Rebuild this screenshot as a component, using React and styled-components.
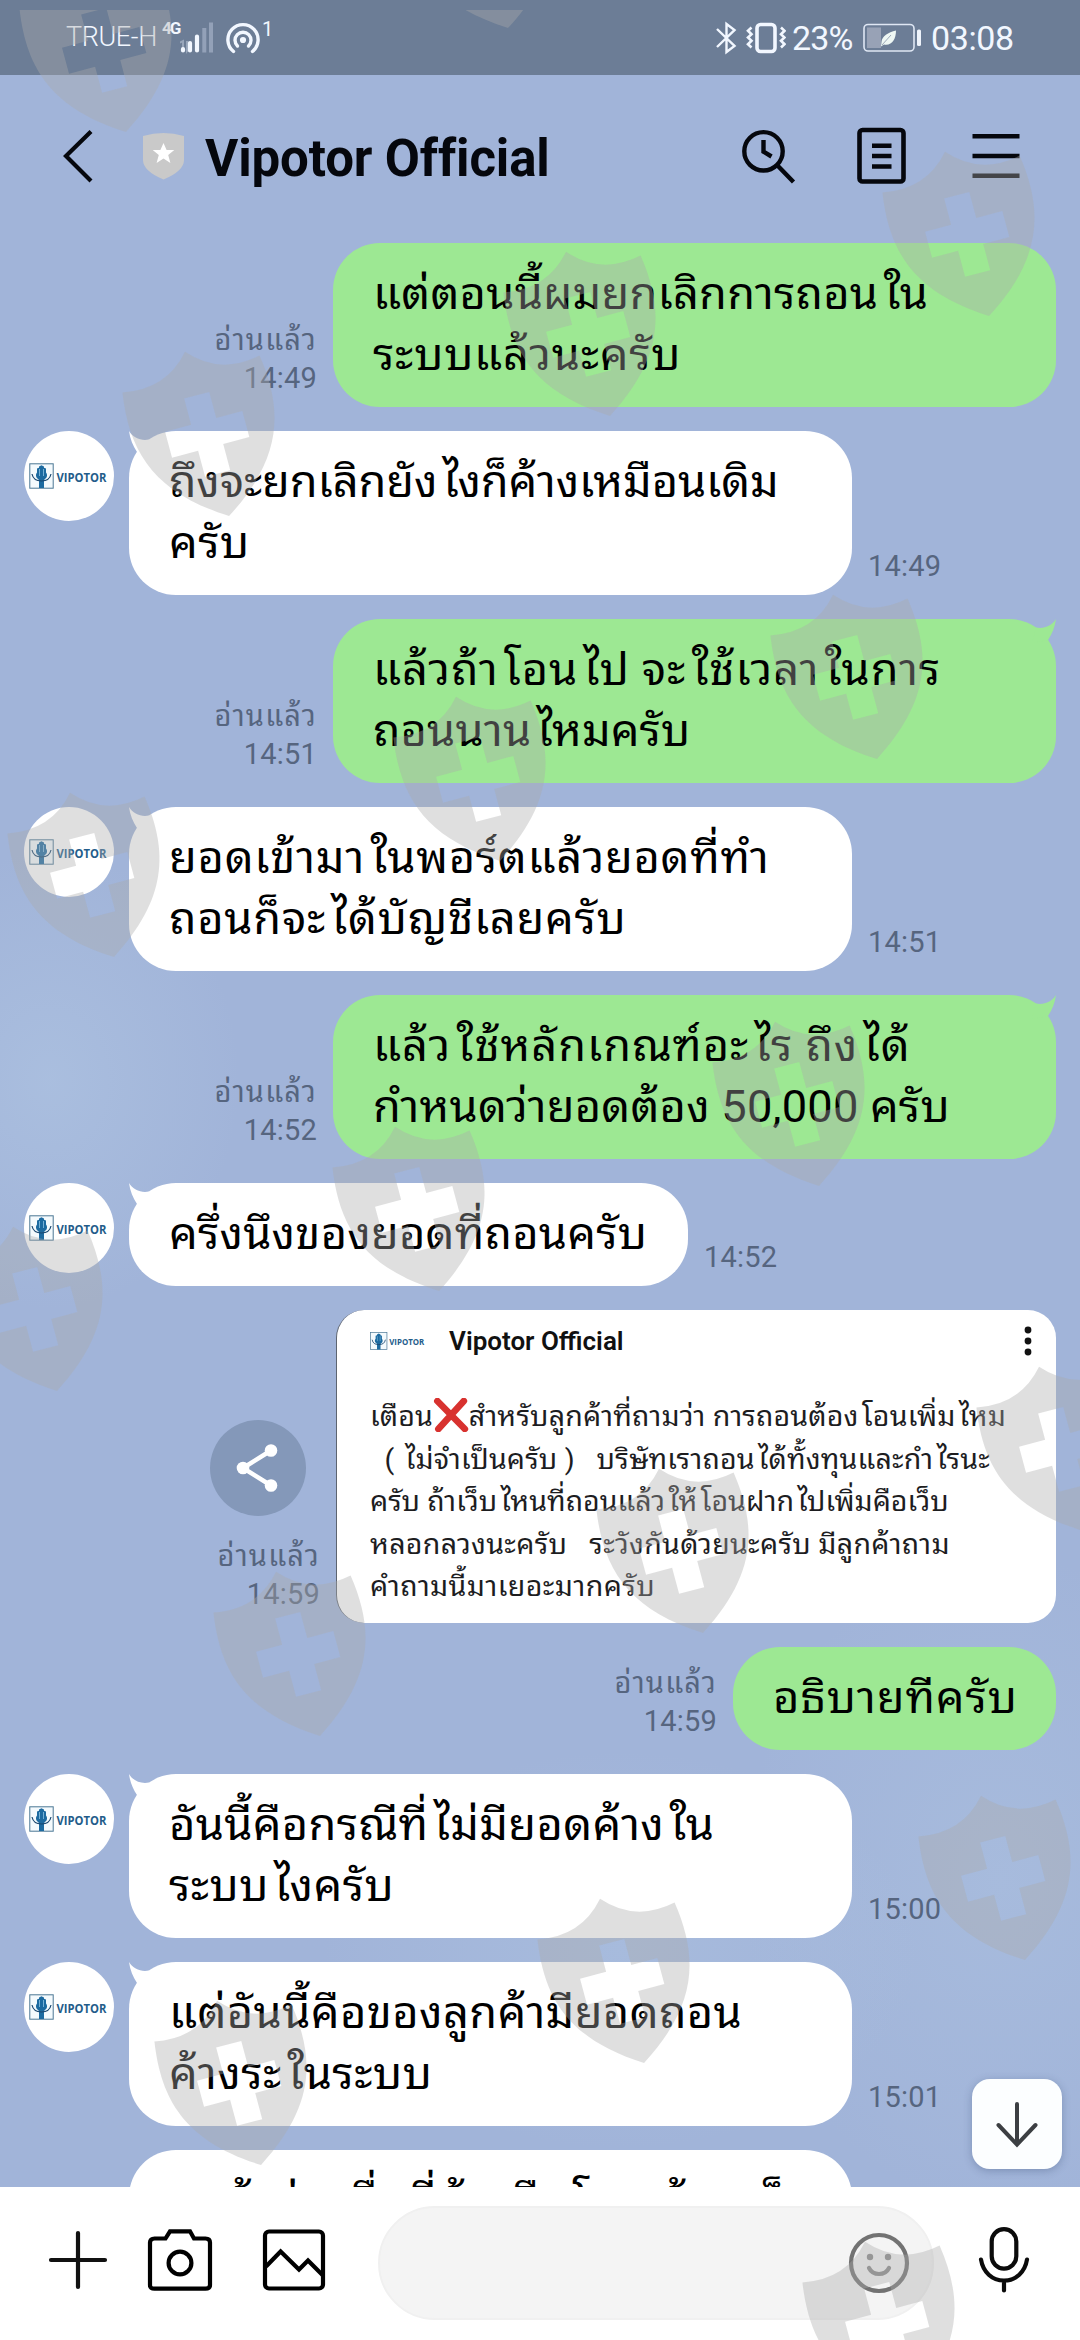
import React from "react";
import styled, { createGlobalStyle } from "styled-components";

const GlobalStyle = createGlobalStyle`
  * {
    box-sizing: border-box;
  }
  body {
    margin: 0;
    font-family: Roboto, "Noto Sans Thai Looped", "Noto Sans Thai", "Noto Sans", "DejaVu Sans", sans-serif;
  }
  svg {
    display: block;
    flex: none;
  }
`;

const Screen = styled.div`
  position: relative;
  display: flex;
  flex-direction: column;
  width: 1080px;
  height: 2340px;
  overflow: hidden;
  background:
    radial-gradient(ellipse 190px 230px at 50px 1080px, rgba(178, 200, 228, 0.5), transparent),
    radial-gradient(ellipse 300px 200px at 620px 1950px, rgba(178, 200, 228, 0.35), transparent),
    radial-gradient(ellipse 260px 330px at 1000px 1880px, rgba(178, 200, 228, 0.35), transparent),
    #a1b4d9;
`;

// Status bar
const StatusBar = styled.div`
  display: flex;
  align-items: center;
  flex: none;
  height: 75px;
  padding: 0 66px;
  background: #6c7d96;
  color: #f2f7ff;
`;

const Carrier = styled.span`
  width: 96px;
  margin-top: -2px;
  font-size: 27px;
  font-weight: 300;
  line-height: 32px;
  letter-spacing: -0.4px;
  white-space: nowrap;
`;

const Network = styled.span`
  align-self: flex-start;
  width: 18px;
  margin-top: 18px;
  font-size: 17px;
  font-weight: 700;
  line-height: 21px;
  letter-spacing: -2px;
`;

const HotspotCount = styled.span`
  align-self: flex-start;
  margin: 17px 0 0 2px;
  font-size: 20px;
  line-height: 24px;
`;

const StatusRight = styled.div`
  display: flex;
  align-items: center;
  margin-left: auto;
  font-size: 34px;
  line-height: 40px;
`;

const Percent = styled.span`
  width: 77px;
  padding-left: 6px;
  letter-spacing: -0.8px;
`;

const Clock = styled.span`
  width: 83px;
  letter-spacing: -0.4px;
`;

// Chat header
const Header = styled.div`
  display: flex;
  align-items: center;
  flex: none;
  height: 167px;
  padding: 0 55px 5px 60px;
`;

const Title = styled.h1`
  flex: 1;
  margin: 5px 0 0 20px;
  font-size: 51px;
  font-weight: 700;
  line-height: 60px;
  letter-spacing: -0.15px;
  color: #05070d;
  white-space: nowrap;
`;

const HeaderIcons = styled.div`
  display: flex;
  align-items: center;
  gap: 53px;
`;

// Messages
const Messages = styled.div`
  position: relative;
  display: flex;
  flex-direction: column;
  gap: 24px;
  flex: 1;
  min-height: 0;
  padding: 1px 24px 0;
  overflow: hidden;
`;

const Row = styled.div`
  display: flex;
  flex: none;
  justify-content: ${(p) => (p.$mine ? "flex-end" : "flex-start")};
`;

const AvatarCircle = styled.div`
  display: flex;
  align-items: center;
  justify-content: center;
  width: 90px;
  height: 90px;
  margin-right: 15px;
  border-radius: 50%;
  background: ${(p) => (p.$empty ? "transparent" : "#fff")};
`;

const LogoMark = styled.svg`
  overflow: visible;
`;

const BubbleBox = styled.div`
  position: relative;
  width: ${(p) => p.$width}px;
  padding: 21px 0 21px 40px;
  border-radius: 47px;
  background: ${(p) => (p.$mine ? "#9de893" : "#fff")};
  color: #000;
  font-size: 43.5px;
  line-height: 61px;
`;

const LineBox = styled.div`
  height: ${(p) => p.$height}px;
  letter-spacing: ${(p) => p.$track}px;
  white-space: pre;
  transform: scaleX(${(p) => p.$stretch});
  transform-origin: left;
`;

const LeadVowel = styled.span`
  margin-left: 0.12em;
`;

const Tail = styled.svg`
  position: absolute;
  top: 0;
  ${(p) => (p.$mine ? "right: 0; transform: scaleX(-1);" : "left: 0;")}
`;

const Meta = styled.div`
  align-self: flex-end;
  margin: 0 16px 10px;
  color: #56657f;
  font-size: 29px;
  line-height: 38px;
  letter-spacing: 0.2px;
  text-align: right;
  white-space: nowrap;
`;

const MetaLine = styled.div`
  height: 38px;
`;

const ReadMark = styled(MetaLine)`
  letter-spacing: 1.2px;
`;

// Shared card
const CardSide = styled.div`
  display: flex;
  flex-direction: column;
  align-items: flex-end;
  justify-content: flex-end;
`;

const ShareButton = styled.div`
  display: flex;
  align-items: center;
  justify-content: center;
  width: 96px;
  height: 96px;
  margin: 0 30px 21px 0;
  border-radius: 50%;
  background: #8498b9;
`;

const Card = styled.div`
  width: 720px;
  height: 313px;
  padding: 16px 24px 0 33px;
  border-left: 1px solid #5d6470;
  border-radius: 28px;
  background: #fff;
`;

const CardHead = styled.div`
  display: flex;
  align-items: center;
  height: 30px;
  margin-bottom: 40px;
`;

const CardTitle = styled.div`
  flex: 1;
  margin-left: 23px;
  font-size: 26px;
  font-weight: 600;
  line-height: 30px;
  color: #111;
`;

const CardText = styled.div`
  color: #1d1d1f;
  font-size: 28px;
  line-height: 42.5px;
`;

const Cross = styled.svg`
  && {
    display: inline-block;
  }
  vertical-align: -6px;
`;

const ScrollDown = styled.button`
  position: absolute;
  right: 18px;
  bottom: 18px;
  display: flex;
  align-items: center;
  justify-content: center;
  width: 90px;
  height: 90px;
  padding: 0;
  border: 0;
  border-radius: 18px;
  background: #fcfeff;
  box-shadow: 0 2px 8px rgba(40, 60, 100, 0.3);
`;

// Input bar
const InputBar = styled.div`
  display: flex;
  align-items: center;
  flex: none;
  height: 153px;
  padding: 0 50px 7px 47px;
  background: #fff;
`;

const InputField = styled.div`
  display: flex;
  align-items: center;
  justify-content: flex-end;
  width: 557px;
  height: 114px;
  margin: 6px 44px 0 51px;
  padding-right: 22px;
  border: 2px solid #f0f0f0;
  border-radius: 57px;
  background: #f4f4f4;
`;

const Gap = styled.div`
  width: ${(p) => p.$size}px;
  flex: none;
`;

const ShieldLayer = styled.svg`
  position: absolute;
  top: 10px;
  left: 0;
  pointer-events: none;
`;

const shields = [
  [88, -10], [470, -114], [951, 174], [572, 274], [191, 374], [839, 617],
  [462, 719], [76, 815], [781, 1044], [401, 1149], [19, 1249], [1045, 1389],
  [665, 1491], [282, 1594], [987, 1818], [606, 1921], [223, 2023], [871, 2264],
];

// each line is [text, letter spacing]
const messages = [
  { mine: true, time: "14:49", width: 723, lines: [["แต่ตอนนี้ผมยกเลิกการถอนใน", 0.2], ["ระบบแล้วนะครับ", 0.73]] },
  { tail: true, time: "14:49", width: 723, lines: [["ถึงจะยกเลิกยังไงก็ค้างเหมือนเดิม", -0.1], ["ครับ", 0.5]] },
  { mine: true, tail: true, time: "14:51", width: 723, lines: [["แล้วถ้าโอนไป จะใช้เวลาในการ", 0.85], ["ถอนนานไหมครับ", 0.1]] },
  { tail: true, time: "14:51", width: 723, lines: [["ยอดเข้ามาในพอร์ตแล้วยอดที่ทำ", 0.7], ["ถอนก็จะได้บัญชีเลยครับ", 0.7]] },
  { mine: true, tail: true, time: "14:52", width: 723, lines: [["แล้วใช้หลักเกณฑ์อะไร ถึงได้", 0.92], ["กำหนดว่ายอดต้อง 50,000 ครับ", 0.19]] },
  { tail: true, time: "14:52", width: 559, lines: [["ครึ่งนึงของยอดที่ถอนครับ", 0.2]] },
  { card: true, time: "14:59" },
  { mine: true, time: "14:59", width: 323, lines: [["อธิบายทีครับ", 0.84]] },
  { tail: true, time: "15:00", width: 723, lines: [["อันนี้คือกรณีที่ไม่มียอดค้างใน", 0.3], ["ระบบไงครับ", 0.43]] },
  { tail: true, time: "15:01", width: 723, lines: [["แต่อันนี้คือของลูกค้ามียอดถอน", 0.37], ["ค้างระในระบบ", 0.46]] },
  { noAvatar: true, width: 723, lines: [["ลูกค้าส่วนอื่นที่ค้างคือโอนเข้ามาก็", 0.7], [" ", 0]] },
];

function Logo({ width }) {
  return (
    <LogoMark width={width} height={(width * 26) / 80} viewBox="0 0 80 26">
      <rect x="0.8" y="0.8" width="23.4" height="24.4" fill="#f4fafd" stroke="#4a7794" strokeWidth="1" />
      <path d="M8 9.500V5.500l2-.8V3.500l2.500-1.200L15 3.500v1.200l2 .8v4c1 1 1.500 3 .5 5l-2.500 2.500V25h-5v-8l-2.500-2.500c-1-2-.5-4 .5-5z" fill="#1c6aa0" />
      <path d="M3 11c1 5 4 7 9.500 7S21 16 22 11" fill="none" stroke="#17456e" strokeWidth="1.200" />
      <path d="M10.500 6v7M14.500 6v7" stroke="#8cc4e4" strokeWidth="0.800" />
      <text x="27.500" y="18.500" fontFamily="Open Sans, sans-serif" fontSize="13" fontWeight="700" fill="#235c8a" textLength="50" lengthAdjust="spacingAndGlyphs">VIPOTOR</text>
    </LogoMark>
  );
}

// Tall leading vowels get some air before them
function Spaced({ text }) {
  return text
    .split(/(?=[ไใโ])/)
    .map((part, i) => (/^[ไใโ]/.test(part) ? <LeadVowel key={i}>{part}</LeadVowel> : part));
}

function Line({ height, track, stretch, children }) {
  return (
    <LineBox $height={height} $track={track} $stretch={stretch}>
      {React.Children.map(children, (c) => (typeof c === "string" ? <Spaced text={c} /> : c))}
    </LineBox>
  );
}

function MetaInfo({ read, time }) {
  if (!time) return null;
  return (
    <Meta>
      {read && <ReadMark>อ่านแล้ว</ReadMark>}
      <MetaLine>{time}</MetaLine>
    </Meta>
  );
}

function Message({ mine, tail, time, width, lines, noAvatar }) {
  return (
    <Row $mine={mine}>
      {!mine && <AvatarCircle $empty={noAvatar}>{!noAvatar && <Logo width={80} />}</AvatarCircle>}
      {mine && <MetaInfo read time={time} />}
      <BubbleBox $mine={mine} $width={width}>
        {tail && (
          <Tail $mine={mine} width="34" height="30" viewBox="0 0 34 30">
            <path d="M0 0C4 7 12 10 20 8.500L24 24L8 21C4 15 1 8 0 0z" fill={mine ? "#9de893" : "#fff"} />
          </Tail>
        )}
        {lines.map(([text, track]) => (
          <Line key={text} height={61} track={track} stretch={1.04}>{text}</Line>
        ))}
      </BubbleBox>
      {!mine && <MetaInfo time={time} />}
    </Row>
  );
}

function SharedCard({ time }) {
  return (
    <Row $mine>
      <CardSide>
        <ShareButton>
          <svg width="48" height="48" viewBox="0 0 48 48" fill="#fff">
            <path d="M37 6.500L9 24L37 41.500" fill="none" stroke="#fff" strokeWidth="4.500" />
            <circle cx="37" cy="6.500" r="6.300" />
            <circle cx="9" cy="24" r="6.300" />
            <circle cx="37" cy="41.500" r="6.300" />
          </svg>
        </ShareButton>
        <MetaInfo read time={time} />
      </CardSide>
      <Card>
        <CardHead>
          <Logo width={56} />
          <CardTitle>Vipotor Official</CardTitle>
          <svg width="8" height="30" viewBox="0 0 8 30" fill="#111">
            <circle cx="4" cy="4" r="3.400" />
            <circle cx="4" cy="15" r="3.400" />
            <circle cx="4" cy="26" r="3.400" />
          </svg>
        </CardHead>
        <CardText>
          <Line height={42.5} track={0.17} stretch={1.02}>
            เตือน
            <Cross width="35" height="34" viewBox="0 0 35 34">
              <path d="M4 3L31 31M30 3L5 31" stroke="#d8322f" strokeWidth="6.500" strokeLinecap="round" />
            </Cross>
            สำหรับลูกค้าที่ถามว่า การถอนต้องโอนเพิ่มไหม
          </Line>
          <Line height={42.5} track={0.17} stretch={1.02}>{"  ( ไม่จำเป็นครับ )   บริษัทเราถอนได้ทั้งทุนและกำไรนะ"}</Line>
          <Line height={42.5} track={0} stretch={1.02}>ครับ ถ้าเว็บไหนที่ถอนแล้วให้โอนฝากไปเพิ่มคือเว็บ</Line>
          <Line height={42.5} track={0.3} stretch={1.02}>{"หลอกลวงนะครับ   ระวังกันด้วยนะครับ มีลูกค้าถาม"}</Line>
          <Line height={42.5} track={0.4} stretch={1.02}>คำถามนี้มาเยอะมากครับ</Line>
        </CardText>
      </Card>
    </Row>
  );
}

function Status() {
  return (
    <StatusBar>
      <Carrier>TRUE-H</Carrier>
      <Network>4G</Network>
      <svg width="46" height="34" viewBox="0 0 46 34">
        <path d="M-1 22l4-2v10M7 20v10l3-4" fill="none" stroke="#98a6bb" strokeWidth="2" />
        <path d="M3 29.500V28M10 29.500V22M17 29.500V15.500" stroke="#f2f7ff" strokeWidth="4.200" strokeLinecap="round" />
        <path d="M24.300 31.500V7M31 31.500V1.500" stroke="#93a1b8" strokeWidth="4" />
      </svg>
      <svg width="34" height="36" viewBox="0 0 34 36" fill="none" stroke="#f2f7ff" strokeWidth="3.400" strokeLinecap="round">
        <path d="M7.500 31.500a15.100 15.100 0 1 1 19 0" />
        <path d="M11.500 26a8 8 0 1 1 11 0" />
        <circle cx="17" cy="20" r="1.400" fill="#f2f7ff" />
      </svg>
      <HotspotCount>1</HotspotCount>
      <StatusRight>
        <svg width="22" height="34" viewBox="0 0 22 34" fill="none" stroke="#f2f7ff" strokeWidth="2.400">
          <path d="M2 8L19.500 25L11.500 31V3L19.500 9L2 26" />
        </svg>
        <Gap $size={9} />
        <svg width="40" height="34" viewBox="0 0 40 34" fill="none" stroke="#f2f7ff">
          <rect x="11" y="3.500" width="18" height="27" rx="3.500" strokeWidth="3.600" />
          <path d="M5.500 6.500L2 9.800L5.500 13.200L2 16.500L5.500 19.800L2 23.200L5.500 26.500M35 6.500L38.500 9.800L35 13.200L38.500 16.500L35 19.800L38.500 23.200L35 26.500" strokeWidth="2.600" />
        </svg>
        <Percent>23%</Percent>
        <svg width="60" height="30" viewBox="0 0 60 30">
          <rect x="1" y="1.500" width="50" height="26.500" rx="4" fill="none" stroke="#dfe7f4" strokeWidth="1.600" />
          <rect x="4" y="4.500" width="14" height="20.500" fill="#98a2b6" />
          <path d="M33 7.500C25 9.500 19 13 18.500 19L18 23.500L21 21.500C29 23 33 16 33 7.500z" fill="#eef7f4" />
          <path d="M19 22L28 12" stroke="#8694a8" strokeWidth="0.800" />
          <rect x="54" y="6.500" width="4" height="16.500" rx="1.500" fill="#eef3fb" />
        </svg>
        <Gap $size={8} />
        <Clock>03:08</Clock>
      </StatusRight>
    </StatusBar>
  );
}

function ChatHeader() {
  return (
    <Header>
      <svg width="36" height="56" viewBox="0 0 36 56">
        <path d="M31 3.500L6 28L31 53" fill="none" stroke="#05070d" strokeWidth="4.200" />
      </svg>
      <Gap $size={46} />
      <svg width="43" height="48" viewBox="0 0 43 48">
        <path d="M1 4Q21.500 -2 42 4V28Q42 39 21.500 47.500Q1 39 1 28z" fill="#c9c9c9" />
        <path d="M21.500 11L24.600 18H32.300L26.200 23L28.400 31L21.500 26.500L14.600 31L16.800 23L10.700 18H18.400z" fill="#fff" />
      </svg>
      <Title>Vipotor Official</Title>
      <HeaderIcons>
        <svg width="60" height="60" viewBox="0 0 60 60" fill="none" stroke="#05070d" strokeWidth="4.400">
          <circle cx="24.500" cy="25.300" r="19.200" />
          <path d="M24.500 14V25.700L32.500 30.500M39 40L54.500 56" />
        </svg>
        <svg width="60" height="60" viewBox="0 0 60 60" fill="none" stroke="#05070d" strokeWidth="4.600">
          <rect x="7.500" y="4" width="44" height="51.500" rx="3" />
          <path d="M20 19.700H39.500M20 30H39.500M20 40.500H39.500" />
        </svg>
        <svg width="60" height="60" viewBox="0 0 60 60" fill="none" stroke="#05070d" strokeWidth="4.400">
          <path d="M7.500 10.300H54.500M7.500 30H54.500M7.500 49.700H54.500" />
        </svg>
      </HeaderIcons>
    </Header>
  );
}

function Composer() {
  return (
    <InputBar>
      <svg width="62" height="62" viewBox="0 0 62 62" stroke="#111" strokeWidth="4.200" strokeLinecap="round">
        <path d="M4 31H58M31 4V58" />
      </svg>
      <Gap $size={38} />
      <svg width="66" height="62" viewBox="0 0 66 62" fill="none" stroke="#000" strokeWidth="4.200">
        <path d="M23 2.300H43L47 9.500H58.500Q63 9.500 63 13.500V56Q63 59.700 58.500 59.700H7.500Q3 59.700 3 56V13.500Q3 9.500 7.500 9.500H18.500z" />
        <circle cx="33" cy="34" r="11.400" />
      </svg>
      <Gap $size={49} />
      <svg width="65" height="62" viewBox="0 0 65 62" fill="none" stroke="#000" strokeWidth="4.200">
        <rect x="3" y="2.500" width="58" height="57" rx="4" />
        <path d="M4 37.500L18.600 22.500L37 40.500L46 31.500L60.500 46" />
      </svg>
      <InputField>
        <svg width="62" height="62" viewBox="0 0 62 62" fill="none" stroke="#727272" strokeWidth="4.200">
          <circle cx="31" cy="31" r="28" />
          <circle cx="22" cy="25" r="3.200" fill="#8a8a8a" stroke="none" />
          <circle cx="40" cy="25" r="3.200" fill="#8a8a8a" stroke="none" />
          <path d="M21 36Q24 42 31 42T41 36" stroke="#8a8a8a" strokeLinecap="round" />
        </svg>
      </InputField>
      <svg width="52" height="68" viewBox="0 0 52 68" fill="none" stroke="#0b0b0b" strokeWidth="4.200" strokeLinecap="round">
        <rect x="13.700" y="3.100" width="24.600" height="39.500" rx="12.300" />
        <path d="M3 33.500C5 46 14 54.500 26 54.500S47 46 49 33.500M26 55V64.500" />
      </svg>
    </InputBar>
  );
}

function Shields() {
  return (
    <ShieldLayer width="1080" height="2330" viewBox="0 10 1080 2330">
      {shields.map(([x, y]) => (
        <path
          key={`${x}-${y}`}
          transform={`translate(${x} ${y}) rotate(-15)`}
          fillRule="evenodd"
          fill="rgba(172, 172, 172, 0.38)"
          d="M0 -23Q28 9 71 0C80 60 66 105 0 147C-66 105 -80 60 -71 0Q-28 9 0 -23z
             M-13 22V49H-40V76H-13V103H13V76H40V49H13V22z"
        />
      ))}
    </ShieldLayer>
  );
}

function App() {
  return (
    <Screen>
      <GlobalStyle />
      <Status />
      <ChatHeader />
      <Messages>
        {messages.map((m, i) =>
          m.card ? <SharedCard key={i} time={m.time} /> : <Message key={i} {...m} />
        )}
        <ScrollDown>
          <svg width="48" height="50" viewBox="0 0 48 50" fill="none" stroke="#3c3f43" strokeWidth="4" strokeLinecap="round">
            <path d="M24 5V45M5.500 26L24 45.500L42.500 26" />
          </svg>
        </ScrollDown>
      </Messages>
      <Composer />
      <Shields />
    </Screen>
  );
}

export default App;
